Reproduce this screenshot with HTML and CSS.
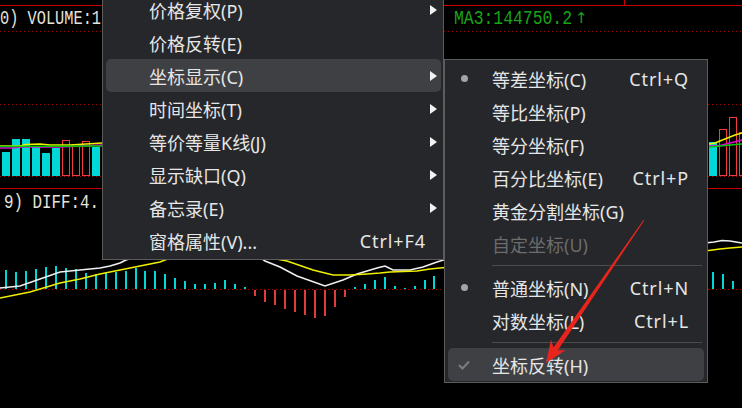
FILE: index.html
```html
<!DOCTYPE html>
<html lang="zh-CN">
<head>
    <meta charset="UTF-8">
    <meta name="viewport" content="width=device-width, initial-scale=1.0">
    <title>坐标显示</title>
    <link rel="stylesheet" href="styles.css">
</head>
<body>
<div class="screen">
    <!-- 走势图背景 -->
    <svg class="chart" width="742" height="408" viewBox="0 0 742 408">
        <line x1="0" y1="5.5" x2="742" y2="5.5" class="axis"/>
        <line x1="624.5" y1="0" x2="624.5" y2="5" class="axis"/>
        <line x1="0" y1="188.5" x2="742" y2="188.5" class="axis"/>
        <line x1="0" y1="31.5" x2="742" y2="31.5" class="grid"/>
        <line x1="0" y1="104.5" x2="742" y2="104.5" class="grid"/>
        <line x1="0" y1="176.5" x2="742" y2="176.5" class="grid"/>
        <line x1="0" y1="289.5" x2="742" y2="289.5" class="grid"/>

        <text x="0" y="24" class="chart-text" textLength="101" lengthAdjust="spacingAndGlyphs">0) VOLUME:1</text>
        <text x="454" y="24" class="chart-text ma" textLength="118" lengthAdjust="spacingAndGlyphs">MA3:144750.2</text>
        <text x="575" y="23" class="chart-arrow">↑</text>
        <text x="4" y="208" class="chart-text" textLength="95" lengthAdjust="spacingAndGlyphs">9) DIFF:4.</text>

        <!-- 成交量 -->
        <g class="vol-up">
            <rect x="2" y="152" width="8" height="24"/>
            <rect x="12" y="139" width="8" height="37"/>
            <rect x="22" y="139" width="8" height="37"/>
            <rect x="32" y="147" width="8" height="29"/>
            <rect x="42" y="153" width="8" height="23"/>
            <rect x="52" y="148" width="8" height="28"/>
            <rect x="92" y="147" width="8" height="29"/>
            <rect x="709" y="142" width="8" height="34"/>
        </g>
        <g class="vol-down">
            <rect x="62.5" y="140.5" width="7" height="35"/>
            <rect x="72.5" y="144.5" width="7" height="31"/>
            <rect x="82.5" y="141.5" width="7" height="34"/>
            <rect x="719.5" y="129.5" width="7" height="46"/>
            <rect x="729.5" y="117.5" width="7" height="58"/>
            <rect x="739.5" y="132.5" width="7" height="43"/>
        </g>
        <polyline class="ln-magenta" points="0,148 12,148 20,147 60,147 102,145"/>
        <polyline class="ln-yellow" points="0,146 20,146 26,144.5 40,144 50,145 70,145 102,143"/>
        <polyline class="ln-green" points="0,146.5 102,146"/>
        <polyline class="ln-magenta" points="709,146 720,145.5 730,143 742,140"/>
        <polyline class="ln-yellow" points="709,144 715,143 720,141 725,139 730,137 735,135 742,133"/>
        <polyline class="ln-green" points="709,147 720,146 730,145 742,144"/>

        <!-- MACD -->
        <g class="macd-up">
            <rect x="5" y="270" width="2" height="19"/>
            <rect x="15" y="272" width="2" height="17"/>
            <rect x="25" y="271" width="2" height="18"/>
            <rect x="35" y="269" width="2" height="20"/>
            <rect x="45" y="267" width="2" height="22"/>
            <rect x="55" y="266" width="2" height="23"/>
            <rect x="65" y="268" width="2" height="21"/>
            <rect x="75" y="269" width="2" height="20"/>
            <rect x="85" y="273" width="2" height="16"/>
            <rect x="95" y="274" width="2" height="15"/>
            <rect x="105" y="273" width="2" height="16"/>
            <rect x="115" y="272" width="2" height="17"/>
            <rect x="125" y="271" width="2" height="18"/>
            <rect x="135" y="268" width="2" height="21"/>
            <rect x="144" y="271" width="2" height="18"/>
            <rect x="154" y="271" width="2" height="18"/>
            <rect x="164" y="274" width="2" height="15"/>
            <rect x="174" y="278" width="2" height="11"/>
            <rect x="184" y="281" width="2" height="8"/>
            <rect x="194" y="284" width="2" height="5"/>
            <rect x="204" y="284" width="2" height="5"/>
            <rect x="214" y="283" width="2" height="6"/>
            <rect x="224" y="280" width="2" height="9"/>
            <rect x="234" y="284" width="2" height="5"/>
            <rect x="244" y="287" width="2" height="2"/>
            <rect x="354" y="287" width="2" height="2"/>
            <rect x="364" y="284" width="2" height="5"/>
            <rect x="374" y="280" width="2" height="9"/>
            <rect x="384" y="277" width="2" height="12"/>
            <rect x="394" y="286" width="2" height="3"/>
            <rect x="404" y="288" width="2" height="1"/>
            <rect x="414" y="286" width="2" height="3"/>
            <rect x="424" y="280" width="2" height="9"/>
            <rect x="433" y="276" width="2" height="13"/>
            <rect x="712" y="272" width="2" height="17"/>
            <rect x="722" y="274" width="2" height="15"/>
            <rect x="732" y="281" width="2" height="8"/>
        </g>
        <g class="macd-down">
            <rect x="254" y="290" width="2" height="6"/>
            <rect x="264" y="290" width="2" height="12"/>
            <rect x="274" y="290" width="2" height="15"/>
            <rect x="284" y="290" width="2" height="19"/>
            <rect x="294" y="290" width="2" height="22"/>
            <rect x="304" y="290" width="2" height="25"/>
            <rect x="314" y="290" width="2" height="28"/>
            <rect x="324" y="290" width="2" height="26"/>
            <rect x="334" y="290" width="2" height="17"/>
            <rect x="344" y="290" width="2" height="7"/>
        </g>
        <polyline class="ln-white" points="0,288 20,286 40,279 60,272 90,269 100,268 110,266 120,263 126,260 180,245 250,250 265,261 280,267 297,276 325,286 343,280 357,274 377,268 385,266 393,270 410,270 423,267 437,262 450,258"/>
        <polyline class="ln-yellow" points="0,298 30,292 50,286 60,283 80,279 100,274 120,270 140,266 160,262 170,258 230,250 287,261 313,270 333,275 350,275 367,274 380,273 390,272 417,271 430,269 450,267"/>
        <polyline class="ln-white" points="705,243 714,242 722,240.5 730,241 742,243"/>
        <polyline class="ln-yellow" points="705,251 720,249 730,248 742,247"/>
    </svg>

    <div class="menu main-menu">
        <div class="item"><span class="label">价格复权(P)</span><span class="key"></span><span class="arrow"></span></div>
        <div class="item"><span class="label">价格反转(E)</span><span class="key"></span><span class="arrow none"></span></div>
        <div class="item active"><span class="label">坐标显示(C)</span><span class="key"></span><span class="arrow"></span></div>
        <div class="item"><span class="label">时间坐标(T)</span><span class="key"></span><span class="arrow"></span></div>
        <div class="item"><span class="label">等价等量K线(J)</span><span class="key"></span><span class="arrow"></span></div>
        <div class="item"><span class="label">显示缺口(Q)</span><span class="key"></span><span class="arrow"></span></div>
        <div class="item"><span class="label">备忘录(E)</span><span class="key"></span><span class="arrow"></span></div>
        <div class="item"><span class="label">窗格属性(V)...</span><span class="key">Ctrl+F4</span><span class="arrow none"></span></div>
    </div>

    <div class="menu sub-menu">
        <div class="item"><span class="icon"><span class="dot"></span></span><span class="label">等差坐标(C)</span><span class="key">Ctrl+Q</span></div>
        <div class="item"><span class="icon"></span><span class="label">等比坐标(P)</span><span class="key"></span></div>
        <div class="item"><span class="icon"></span><span class="label">等分坐标(F)</span><span class="key"></span></div>
        <div class="item"><span class="icon"></span><span class="label">百分比坐标(E)</span><span class="key">Ctrl+P</span></div>
        <div class="item"><span class="icon"></span><span class="label">黄金分割坐标(G)</span><span class="key"></span></div>
        <div class="item disabled"><span class="icon"></span><span class="label">自定坐标(U)</span><span class="key"></span></div>
        <div class="sep"></div>
        <div class="item"><span class="icon"><span class="dot"></span></span><span class="label">普通坐标(N)</span><span class="key">Ctrl+N</span></div>
        <div class="item"><span class="icon"></span><span class="label">对数坐标(L)</span><span class="key">Ctrl+L</span></div>
        <div class="sep"></div>
        <div class="item active">
            <span class="icon">
                <svg width="12" height="10" viewBox="0 0 12 10"><polyline points="1,5 4.5,8.5 11,1.5" fill="none" stroke="#7d7d7d" stroke-width="2"/></svg>
            </span>
            <span class="label">坐标反转(H)</span><span class="key"></span>
        </div>
    </div>

    <!-- 标注箭头 -->
    <svg class="pointer" width="742" height="408" viewBox="0 0 742 408">
        <polygon points="644.4,220.3 557.7,350.4 565.8,349.9 546,363 551,339.7 553.5,347.6 643.6,219.7" fill="#e8241c"/>
    </svg>
</div>
</body>
</html>
```

FILE: styles.css
```css
body {
    margin: 0;
    background: #000;
    font-family: "Noto Sans", "Noto Sans CJK SC", sans-serif;
}
.screen {
    position: relative;
    width: 742px;
    height: 408px;
    overflow: hidden;
    background: #000;
}
.chart {
    display: block;
}
.axis {
    stroke: #c80000;
    stroke-width: 1;
}
.grid {
    stroke: #a80000;
    stroke-width: 1;
    stroke-dasharray: 1 3;
}
.chart-text {
    font-family: "Liberation Mono", monospace;
    font-size: 20px;
    fill: #e4e4dc;
}
.chart-text.ma {
    fill: #18a418;
}
.chart-arrow {
    font-family: "DejaVu Sans", sans-serif;
    font-size: 15px;
    fill: #18a418;
}
.vol-up, .macd-up {
    fill: #00d8d8;
}
.vol-down {
    fill: none;
    stroke: #f03c3c;
}
.macd-down {
    fill: #e03c3c;
}
.ln-white, .ln-yellow, .ln-green, .ln-magenta {
    fill: none;
    stroke-width: 1.5;
}
.ln-white { stroke: #f0f0f0; }
.ln-yellow { stroke: #f0f000; }
.ln-green { stroke: #00c800; }
.ln-magenta { stroke: #e000e0; }

.menu {
    position: absolute;
    box-sizing: border-box;
    background: #25272b;
    border: 1px solid #5c5c5c;
    color: #e6e6e6;
    font-size: 18px;
}
.main-menu {
    left: 102px;
    top: -10px;
    width: 342px;
    padding: 2px 0 2px;
}
.sub-menu {
    left: 444px;
    top: 59px;
    width: 264px;
    padding: 2px 0 1px;
}
.item {
    display: flex;
    align-items: center;
    height: 33px;
    border-radius: 5px;
    white-space: nowrap;
}
.item.active {
    background: #3f4043;
}
.item.disabled {
    color: #6c6c6c;
}
.label {
    flex: 1;
}
.key {
    letter-spacing: 0.9px;
}
.main-menu .item {
    margin: 0 2px 0 3px;
    padding: 0 4px 0 43px;
}
.main-menu .key {
    margin-right: 4px;
}
.arrow {
    width: 0;
    height: 0;
    border-left: 7px solid #f2f2f2;
    border-top: 5.5px solid transparent;
    border-bottom: 5.5px solid transparent;
}
.arrow.none {
    border-left-color: transparent;
}
.sub-menu .item {
    margin: 0 3px;
    padding-right: 15px;
}
.icon {
    width: 32px;
    display: flex;
    justify-content: center;
    align-items: center;
    margin-right: 12px;
}
.dot {
    width: 7px;
    height: 7px;
    border-radius: 50%;
    background: #a4a4a4;
}
.sep {
    height: 1px;
    margin: 5px 5px 5px 47px;
    background: #4c4c4c;
}
.pointer {
    position: absolute;
    left: 0;
    top: 0;
}
```
